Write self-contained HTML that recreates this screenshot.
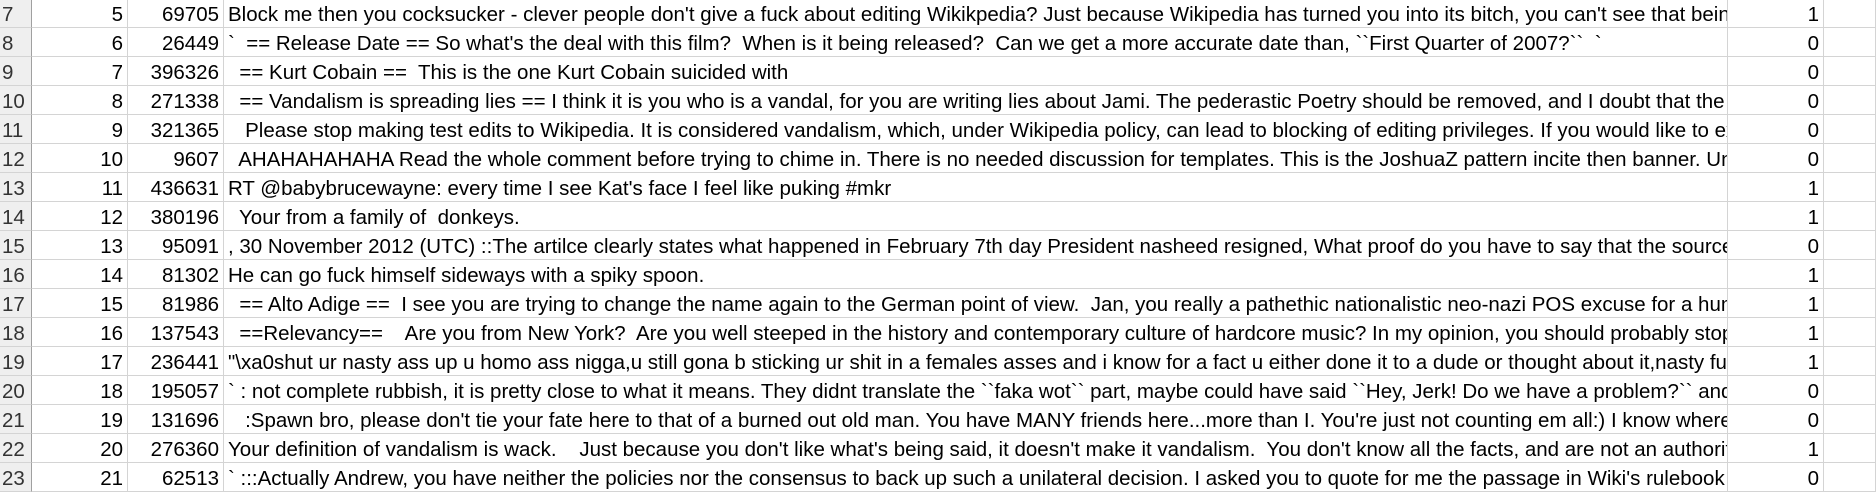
<!DOCTYPE html>
<html><head><meta charset="utf-8"><style>
body{margin:0;width:1876px;height:480px;overflow:hidden;background:#fff;font-family:"Liberation Sans",sans-serif;font-size:20.5px;color:#000}
.w{position:absolute;top:-1px;left:0}
.r{display:grid;grid-template-columns:32px 96px 96px 1504px 96px 52px;height:29px}
.r div{box-sizing:border-box;height:29px;border-right:1px solid #d4d4d4;border-bottom:1px solid #d4d4d4;line-height:29px;white-space:pre;overflow:hidden;padding:1px 4px 0 4px}
.r div:nth-child(1){background:#efefef;border-right:1px solid #a0a0a0;color:#333;padding-left:2px}
.r div:nth-child(2),.r div:nth-child(3),.r div:nth-child(5){text-align:right}
</style></head><body><div class="w">
<div class="r"><div>7</div><div>5</div><div>69705</div><div>Block me then you cocksucker - clever people don't give a fuck about editing Wikikpedia? Just because Wikipedia has turned you into its bitch, you can't see that being</div><div>1</div><div></div></div>
<div class="r"><div>8</div><div>6</div><div>26449</div><div>`  == Release Date == So what's the deal with this film?  When is it being released?  Can we get a more accurate date than, ``First Quarter of 2007?``  `</div><div>0</div><div></div></div>
<div class="r"><div>9</div><div>7</div><div>396326</div><div>  == Kurt Cobain ==  This is the one Kurt Cobain suicided with</div><div>0</div><div></div></div>
<div class="r"><div>10</div><div>8</div><div>271338</div><div>  == Vandalism is spreading lies == I think it is you who is a vandal, for you are writing lies about Jami. The pederastic Poetry should be removed, and I doubt that the </div><div>0</div><div></div></div>
<div class="r"><div>11</div><div>9</div><div>321365</div><div>   Please stop making test edits to Wikipedia. It is considered vandalism, which, under Wikipedia policy, can lead to blocking of editing privileges. If you would like to experiment</div><div>0</div><div></div></div>
<div class="r"><div>12</div><div>10</div><div>9607</div><div>  AHAHAHAHAHA Read the whole comment before trying to chime in. There is no needed discussion for templates. This is the JoshuaZ pattern incite then banner. Unless</div><div>0</div><div></div></div>
<div class="r"><div>13</div><div>11</div><div>436631</div><div>RT @babybrucewayne: every time I see Kat's face I feel like puking #mkr</div><div>1</div><div></div></div>
<div class="r"><div>14</div><div>12</div><div>380196</div><div>  Your from a family of  donkeys.</div><div>1</div><div></div></div>
<div class="r"><div>15</div><div>13</div><div>95091</div><div>, 30 November 2012 (UTC) ::The artilce clearly states what happened in February 7th day President nasheed resigned, What proof do you have to say that the source is</div><div>0</div><div></div></div>
<div class="r"><div>16</div><div>14</div><div>81302</div><div>He can go fuck himself sideways with a spiky spoon.</div><div>1</div><div></div></div>
<div class="r"><div>17</div><div>15</div><div>81986</div><div>  == Alto Adige ==  I see you are trying to change the name again to the German point of view.  Jan, you really a pathethic nationalistic neo-nazi POS excuse for a human</div><div>1</div><div></div></div>
<div class="r"><div>18</div><div>16</div><div>137543</div><div>  ==Relevancy==    Are you from New York?  Are you well steeped in the history and contemporary culture of hardcore music? In my opinion, you should probably stop</div><div>1</div><div></div></div>
<div class="r"><div>19</div><div>17</div><div>236441</div><div>"\xa0shut ur nasty ass up u homo ass nigga,u still gona b sticking ur shit in a females asses and i know for a fact u either done it to a dude or thought about it,nasty fuck</div><div>1</div><div></div></div>
<div class="r"><div>20</div><div>18</div><div>195057</div><div>` : not complete rubbish, it is pretty close to what it means. They didnt translate the ``faka wot`` part, maybe could have said ``Hey, Jerk! Do we have a problem?`` and</div><div>0</div><div></div></div>
<div class="r"><div>21</div><div>19</div><div>131696</div><div>   :Spawn bro, please don't tie your fate here to that of a burned out old man. You have MANY friends here...more than I. You're just not counting em all:) I know where</div><div>0</div><div></div></div>
<div class="r"><div>22</div><div>20</div><div>276360</div><div>Your definition of vandalism is wack.    Just because you don't like what's being said, it doesn't make it vandalism.  You don't know all the facts, and are not an authority</div><div>1</div><div></div></div>
<div class="r"><div>23</div><div>21</div><div>62513</div><div>` :::Actually Andrew, you have neither the policies nor the consensus to back up such a unilateral decision. I asked you to quote for me the passage in Wiki's rulebook</div><div>0</div><div></div></div>
</div></body></html>
